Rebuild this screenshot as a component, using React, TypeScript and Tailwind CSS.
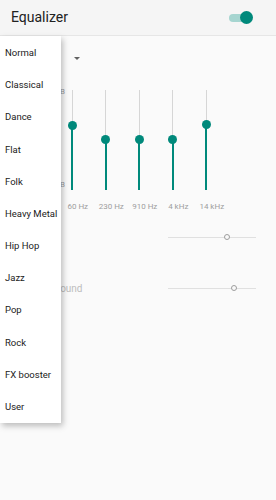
import React from "react";

const presets = ["Normal","Classical","Dance","Flat","Folk","Heavy Metal","Hip Hop","Jazz","Pop","Rock","FX booster","User"];
const bands = [
  { label: "60 Hz", y: 35 },
  { label: "230 Hz", y: 49 },
  { label: "910 Hz", y: 49 },
  { label: "4 kHz", y: 49 },
  { label: "14 kHz", y: 34 },
];

function VSlider({ y }: { y: number }) {
  return (
    <div className="relative h-[100px] w-[10px]">
      <div className="absolute left-[4.5px] top-0 h-full w-px bg-[#d6d6d6]" />
      <div className="absolute left-[4px] w-[2px] bg-[#00897b]" style={{ top: y, bottom: 0 }} />
      <div className="absolute left-[0.5px] h-[9px] w-[9px] rounded-full bg-[#00897b]" style={{ top: y - 4.5 }} />
    </div>
  );
}

function HSlider({ pos }: { pos: number }) {
  return (
    <div className="relative h-[8px] w-[88px]">
      <div className="absolute left-0 right-0 top-[3.5px] h-px bg-[#e0e0e0]" />
      <div className="absolute top-[1px] h-[6px] w-[6px] rounded-full border-[1.5px] border-[#9e9e9e] bg-[#fafafa]" style={{ left: pos - 3 }} />
    </div>
  );
}

export default function App() {
  return (
    <div className="relative h-[500px] w-[276px] overflow-hidden bg-[#fafafa]" style={{ fontFamily: "Roboto, 'Noto Sans', sans-serif" }}>
      <div className="flex h-[36px] items-center justify-between border-b border-[#e6e6e6] bg-[#f5f5f5] pl-[11px] pr-[23px]">
        <span className="text-[14px] text-[#212121]">Equalizer</span>
        <div className="relative h-[12px] w-[24px]">
          <div className="absolute left-0 top-[2px] h-[8px] w-[20px] rounded-full bg-[#a6d5d0]" />
          <div className="absolute right-0 top-[-1px] h-[13px] w-[13px] rounded-full bg-[#00897b]" />
        </div>
      </div>

      <div className="flex flex-col">
        <div className="flex h-[44px] items-center pl-[74px]">
          <div className="h-0 w-0 border-l-[3px] border-r-[3px] border-t-[3px] border-l-transparent border-r-transparent border-t-[#616161]" />
        </div>
        <div className="flex">
          <div className="relative w-[61px]">
            <span className="absolute right-[-4px] top-[6px] text-[8px] text-[#9e9e9e]">15 dB</span>
            <span className="absolute right-[-4px] top-[99px] text-[8px] text-[#9e9e9e]">-15 dB</span>
          </div>
          {bands.map((b) => (
            <div key={b.label} className="flex w-[33.5px] flex-col items-center">
              <div className="mt-[10px] pr-[11px]">
                <VSlider y={b.y} />
              </div>
              <span className="mt-[11px] text-[8px] leading-[12px] text-[#9e9e9e]">{b.label}</span>
            </div>
          ))}
        </div>
        <div className="mt-[14px] flex h-[20px] items-center">
          <span className="w-[168px]" />
          <HSlider pos={59} />
        </div>
        <div className="mt-[31px] flex h-[20px] items-center">
          <span className="w-[168px] pl-[42px] text-[10px] text-[#bdbdbd]">Surround</span>
          <HSlider pos={66} />
        </div>
      </div>

      <div className="absolute left-0 top-[36px] flex w-[61px] flex-col bg-white pt-[1px] shadow-[2px_3px_6px_rgba(0,0,0,0.25)]">
        {presets.map((p) => (
          <div key={p} className="flex h-[32.2px] items-center whitespace-nowrap pl-[5px] text-[9.5px] text-[#212121]">
            {p}
          </div>
        ))}
      </div>
    </div>
  );
}
